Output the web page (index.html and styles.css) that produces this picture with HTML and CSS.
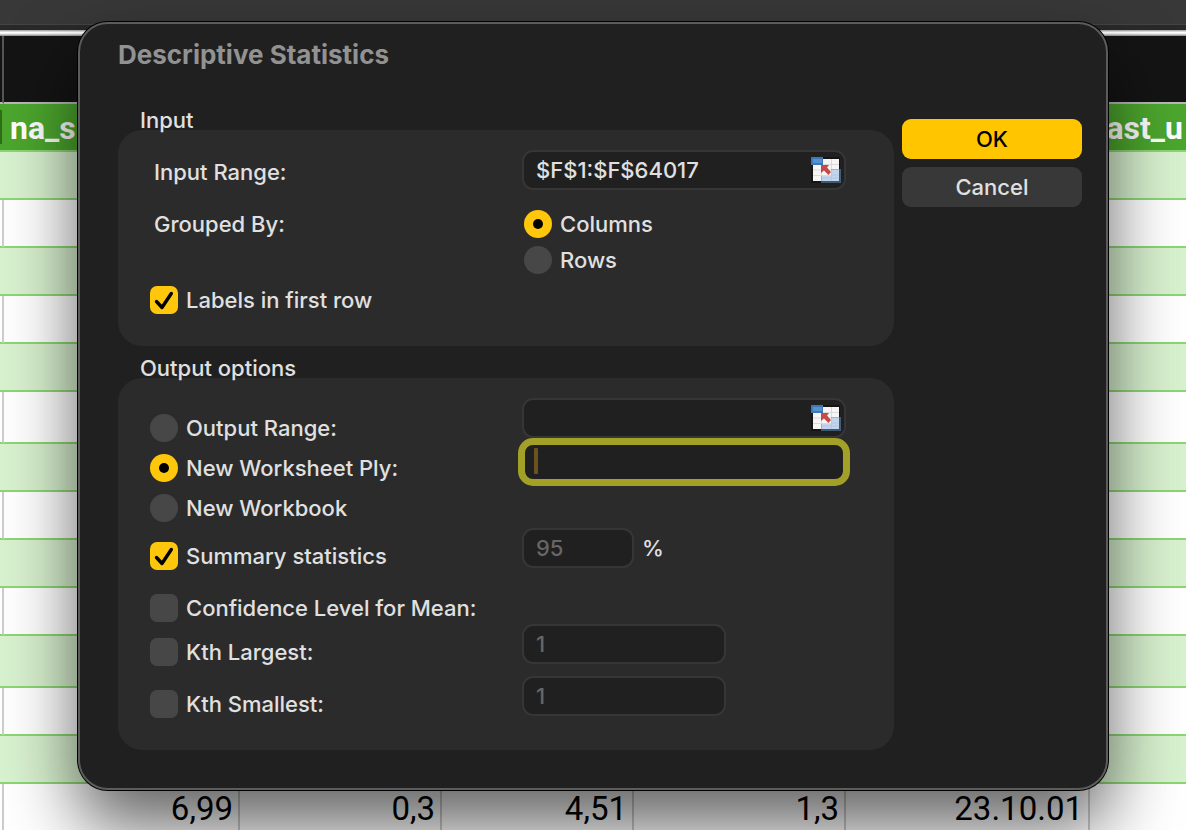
FILE: index.html
```html
<!DOCTYPE html>
<html lang="en">
<head>
  <meta charset="UTF-8">
  <title>Descriptive Statistics</title>
  <link rel="stylesheet" href="styles.css">
</head>
<body>

  <!-- Shared icons -->
  <svg class="sprite" aria-hidden="true">
    <symbol id="rangeIcon" viewBox="0 0 30 26">
      <rect x="0" y="0" width="29" height="26" fill="#151515"/>
      <rect x="2" y="2" width="26" height="22" fill="#f6f4f4"/>
      <path d="M2 7.500H28M2 13H28M2 18.500H28M10.500 2V24M20.500 2V24" stroke="#dcd9d9" stroke-width="1" fill="none"/>
      <path d="M20 12H30V26H10V19H20Z" fill="#5d8fc4" opacity=".55"/>
      <path d="M20 13H28V24H11V19H20Z" fill="#c3d5ea"/>
      <path d="M11 21H28M20 18H28M20.500 13V24" stroke="#b2c8e2" stroke-width="1" fill="none"/>
      <rect x="0" y="0" width="12" height="8" fill="#3c78b8"/>
      <rect x="2" y="2" width="9" height="4" fill="#5590cf"/>
      <path d="M10 8H18L16 10.500L20 15L17.500 18L13 13.500L10 16Z" fill="#c64a4a"/>
    </symbol>
  </svg>

  <!-- Spreadsheet behind the dialog -->
  <div class="sheet">
    <div class="toolbar"></div>
    <div class="divider"></div>
    <table class="grid">
      <colgroup>
        <col class="col-edge"><col class="col-a"><col class="col-b"><col class="col-c"><col class="col-d"><col class="col-e"><col>
      </colgroup>
      <thead>
        <tr class="letters"><td></td><td></td><td></td><td></td><td></td><td></td><td></td></tr>
        <tr class="names"><th><span class="filter"></span></th><th>na_s</th><th></th><th></th><th></th><th></th><th>last_u</th></tr>
      </thead>
      <tbody>
        <tr class="band"><td colspan="7"></td></tr>
        <tr><td></td><td></td><td></td><td></td><td></td><td></td><td></td></tr>
        <tr class="band"><td colspan="7"></td></tr>
        <tr><td></td><td></td><td></td><td></td><td></td><td></td><td></td></tr>
        <tr class="band"><td colspan="7"></td></tr>
        <tr class="tall"><td></td><td></td><td></td><td></td><td></td><td></td><td></td></tr>
        <tr class="band"><td colspan="7"></td></tr>
        <tr><td></td><td></td><td></td><td></td><td></td><td></td><td></td></tr>
        <tr class="band"><td colspan="7"></td></tr>
        <tr><td></td><td></td><td></td><td></td><td></td><td></td><td></td></tr>
        <tr class="band tall"><td colspan="7"></td></tr>
        <tr><td></td><td></td><td></td><td></td><td></td><td></td><td></td></tr>
        <tr class="band"><td colspan="7"></td></tr>
        <tr class="tall"><td></td><td>6,99</td><td>0,3</td><td>4,51</td><td>1,3</td><td>23.10.01</td><td></td></tr>
      </tbody>
    </table>
  </div>

  <!-- Dialog -->
  <form class="dialog" role="dialog" aria-labelledby="dialogTitle">
    <h1 id="dialogTitle">Descriptive Statistics</h1>
    <div class="dialog-body">
      <div class="groups">

        <section>
          <h2>Input</h2>
          <div class="group">
            <div class="labels">
              <label class="row text-row" for="inputRange">Input Range:</label>
              <div class="row text-row gap-l" id="groupedBy">Grouped By:</div>
              <label class="row gap-xxl"><input type="checkbox" checked>Labels in first row</label>
            </div>
            <div class="fields">
              <div class="range">
                <input type="text" id="inputRange" value="$F$1:$F$64017">
                <button type="button" class="picker" aria-label="Select range"><svg><use href="#rangeIcon"/></svg></button>
              </div>
              <div class="choices" role="radiogroup" aria-labelledby="groupedBy">
                <label class="row gap-m"><input type="radio" name="grouped" checked>Columns</label>
                <label class="row gap-s"><input type="radio" name="grouped">Rows</label>
              </div>
            </div>
          </div>
        </section>

        <section>
          <h2>Output options</h2>
          <div class="group output">
            <div class="labels">
              <label class="row"><input type="radio" name="output">Output Range:</label>
              <label class="row"><input type="radio" name="output" checked>New Worksheet Ply:</label>
              <label class="row"><input type="radio" name="output">New Workbook</label>
              <label class="row gap-m"><input type="checkbox" checked>Summary statistics</label>
              <label class="row gap-l"><input type="checkbox">Confidence Level for Mean:</label>
              <label class="row gap-k"><input type="checkbox">Kth Largest:</label>
              <label class="row gap-l"><input type="checkbox">Kth Smallest:</label>
            </div>
            <div class="fields">
              <div class="range">
                <input type="text" aria-label="Output range">
                <button type="button" class="picker" aria-label="Select range"><svg><use href="#rangeIcon"/></svg></button>
              </div>
              <div class="range active">
                <input type="text" aria-label="Worksheet name">
                <span class="caret"></span>
              </div>
              <div class="percent">
                <input type="text" id="confidence" value="95" disabled>
                <label for="confidence">%</label>
              </div>
              <input type="text" class="kth largest" aria-label="Kth largest" value="1" disabled>
              <input type="text" class="kth smallest" aria-label="Kth smallest" value="1" disabled>
            </div>
          </div>
        </section>

      </div>
      <div class="actions">
        <button type="submit" class="ok">OK</button>
        <button type="button">Cancel</button>
      </div>
    </div>
  </form>

</body>
</html>
```

FILE: styles.css
```css
* {
  box-sizing: border-box;
}
body {
  margin: 0;
  min-height: 100vh;
  position: relative;
  overflow: hidden;
  background-color: #fff;
  font-family: Inter, "Liberation Sans", sans-serif;
  font-size: 22px;
  font-weight: 500;
  color: #e0e0e0;
}
h1, h2 {
  margin: 0;
}
input, button {
  font: inherit;
  color: inherit;
  margin: 0;
}
.sprite {
  display: none;
}

/* Spreadsheet */
.sheet {
  height: 100vh;
  overflow: hidden;
}
.toolbar {
  height: 30px;
  background: linear-gradient(#383838 24px, #444 24px, #444 25px, #292929 25px);
}
.divider {
  height: 6px;
  background: linear-gradient(#999, #fff 40%, #eee 60%, #888);
}
.grid {
  width: 100%;
  table-layout: fixed;
  border-collapse: separate;
  border-spacing: 0;
  font-family: Roboto, "Liberation Sans", sans-serif;
  font-size: 33px;
  font-weight: 400;
  line-height: 38px;
  color: #000;
}
.col-edge { width: 4px; }
.col-a { width: 236px; }
.col-b { width: 202px; }
.col-c { width: 192px; }
.col-d { width: 212px; }
.col-e { width: 244px; }
.grid tr {
  height: 48px;
}
.grid tr.tall {
  height: 52px;
}
.grid td {
  padding: 0 5px 0 0;
  border-right: 2px solid #ccc;
  border-bottom: 2px solid #8bd672;
  text-align: right;
  vertical-align: middle;
  white-space: nowrap;
}
.grid td:first-child,
.grid th:first-child {
  padding: 0;
}
.grid .letters {
  height: 68px;
}
.grid .letters td {
  background-color: #141414;
  border-right-color: #555;
  border-bottom-color: #b8b8b8;
}
.grid td:last-child {
  border-right: 0;
}
.grid th {
  padding: 2px 0 0 6px;
  background-color: #4ca62d;
  border-bottom: 2px solid #8bd672;
  color: #fff;
  font-size: 32px;
  font-weight: 700;
  text-align: left;
  white-space: nowrap;
}
.grid th:last-child {
  padding-left: 8px;
}
.filter {
  display: block;
  width: 2px;
  height: 34px;
  background-color: #2f6f1a;
}
.grid .band td {
  background-color: #d8f1cf;
  border-right: 0;
}

/* Dialog */
.dialog {
  position: absolute;
  top: 22px;
  left: 78px;
  right: 78px;
  padding: 14px 24px 38px 38px;
  background-color: #202020;
  border: 2px solid #5c5c5c;
  border-radius: 30px;
  box-shadow: 0 0 0 1px #000, 0 36px 70px rgba(0, 0, 0, 0.62);
}
.dialog h1 {
  font-size: 26px;
  line-height: 34px;
  font-weight: 700;
  color: #929292;
}
.dialog-body {
  display: flex;
  gap: 8px;
  margin-top: 34px;
}
.groups {
  flex: 1;
  display: flex;
  flex-direction: column;
  gap: 8px;
}
.dialog h2 {
  padding-left: 22px;
  margin-bottom: -4px;
  font-size: 22px;
  line-height: 28px;
  font-weight: 500;
}
.group {
  display: flex;
  padding: 20px 32px 32px;
  background-color: #2b2b2b;
  border-radius: 24px;
}
.labels {
  width: 372px;
  padding-top: 8px;
}
.row {
  display: flex;
  align-items: center;
  gap: 8px;
  height: 28px;
  white-space: nowrap;
}
.text-row {
  padding-left: 4px;
}
.choices {
  padding-left: 2px;
}
.output .labels {
  padding-top: 16px;
}
.output .row + .row {
  margin-top: 12px;
}
.gap-s { margin-top: 8px; }
.gap-m, .output .row.gap-m { margin-top: 20px; }
.gap-l, .output .row.gap-l { margin-top: 24px; }
.output .row.gap-k { margin-top: 16px; }
.gap-xxl { margin-top: 48px; }

/* Radio buttons and check boxes */
input[type="radio"],
input[type="checkbox"] {
  appearance: none;
  flex: none;
  display: grid;
  place-items: center;
  width: 28px;
  height: 28px;
  background-color: #474747;
}
input[type="radio"] {
  border-radius: 50%;
}
input[type="checkbox"] {
  border-radius: 7px;
}
input[type="radio"]:checked,
input[type="checkbox"]:checked {
  background-color: #ffc70b;
}
input[type="radio"]:checked::before {
  content: "";
  width: 10px;
  height: 10px;
  border-radius: 50%;
  background-color: #000;
}
input[type="checkbox"]:checked::before {
  content: "";
  width: 28px;
  height: 28px;
  background: url('data:image/svg+xml,<svg xmlns="http://www.w3.org/2000/svg" viewBox="0 0 28 28"><path d="M6.500 15.500L12 21.500L21.300 7.500" fill="none" stroke="black" stroke-width="3.400" stroke-linecap="round" stroke-linejoin="round"/></svg>');
}

/* Text boxes */
input[type="text"] {
  display: block;
  width: 100%;
  height: 40px;
  padding: 0 12px;
  background-color: #202020;
  border: 2px solid #363636;
  border-radius: 11px;
  outline: 0;
}
input[type="text"]:disabled {
  color: #666;
}
.range {
  position: relative;
  width: 324px;
}
.picker {
  position: absolute;
  top: 7px;
  right: 5px;
  width: 30px;
  height: 26px;
  padding: 0;
  border: 0;
  background: none;
}
.picker svg {
  display: block;
  width: 30px;
  height: 26px;
}
.active {
  margin-top: 4px;
}
.active input[type="text"] {
  border: 3px solid #a3a027;
  box-shadow: 0 0 0 4px #a3a027;
}
.caret {
  position: absolute;
  top: 6px;
  left: 12px;
  width: 4px;
  height: 26px;
  border-radius: 1px;
  background-color: #6b5320;
}
.percent {
  display: flex;
  align-items: center;
  gap: 8px;
  margin-top: 46px;
}
.percent input[type="text"] {
  width: 112px;
}
input[type="text"].kth {
  width: 204px;
}
.largest {
  margin-top: 56px;
}
.smallest {
  margin-top: 12px;
}

/* Buttons */
.actions {
  width: 180px;
  display: flex;
  flex-direction: column;
  gap: 8px;
  padding-top: 13px;
}
.actions button {
  height: 40px;
  border: 0;
  border-radius: 9px;
  background-color: #383838;
}
.actions .ok {
  background-color: #ffc600;
  color: #000;
}
```
